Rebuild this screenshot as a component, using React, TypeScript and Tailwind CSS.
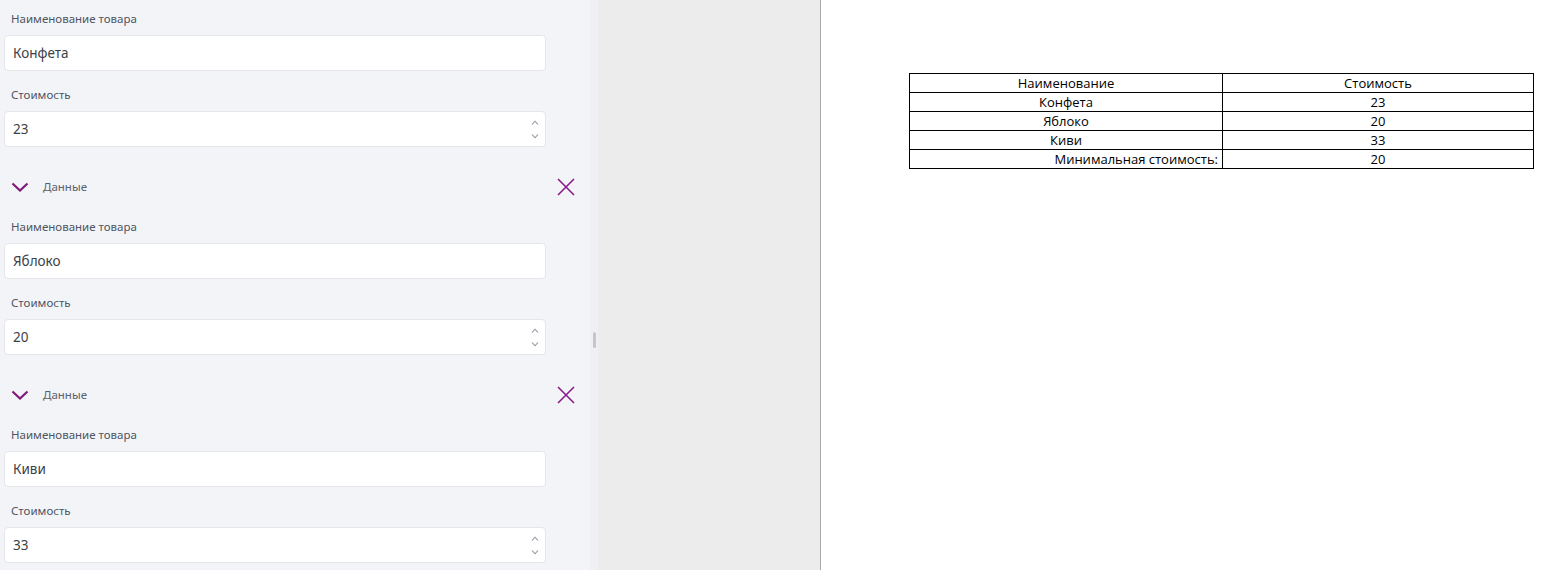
const items = [
  { name: "Конфета", price: "23" },
  { name: "Яблоко", price: "20" },
  { name: "Киви", price: "33" },
];

function Field({ label, value, spin }: { label: string; value: string; spin?: boolean }) {
  return (
    <div>
      <div className="h-4 pl-[7px] text-[11.5px] leading-4 text-[#4f5563]">{label}</div>
      <div className="mt-2 flex h-9 w-[542px] items-center justify-between rounded-[4px] border border-[#e4e6eb] bg-white pl-[8px] pr-[6px] text-[13.5px] text-[#3b3f47]">
        <span>{value}</span>
        {spin && (
          <div className="flex flex-col items-center gap-[9px] text-[#8b95a4]">
            <svg width="8" height="5" viewBox="0 0 8 5" fill="none" stroke="currentColor" strokeWidth="1.1">
              <path d="M1 4.5 L4 1.2 L7 4.5" />
            </svg>
            <svg width="8" height="5" viewBox="0 0 8 5" fill="none" stroke="currentColor" strokeWidth="1.1">
              <path d="M1 0.5 L4 3.8 L7 0.5" />
            </svg>
          </div>
        )}
      </div>
    </div>
  );
}

function GroupHeader() {
  return (
    <div className="mt-5 flex h-10 w-[571px] items-center justify-between">
      <div className="flex items-center">
        <svg className="ml-[7px]" width="18" height="10" viewBox="0 0 18 10" fill="none" stroke="#7d1a7b" strokeWidth="2.2">
          <path d="M1.5 1.5 L9 8.5 L16.5 1.5" />
        </svg>
        <span className="ml-[14px] text-[11.5px] text-[#5a606c]">Данные</span>
      </div>
      <svg width="18" height="18" viewBox="0 0 18 18" fill="none" stroke="#8a1a88" strokeWidth="1.6">
        <path d="M1 1 L17 17 M17 1 L1 17" />
      </svg>
    </div>
  );
}

export default function App() {
  return (
    <div className="flex h-[570px] w-[1545px] overflow-hidden bg-white" style={{ fontFamily: '"Noto Sans", "Open Sans", sans-serif' }}>
      <div className="w-[590px] shrink-0 bg-[#f3f4f8] pl-1 pt-[11px]">
        {items.map((it, i) => (
          <div key={it.name}>
            {i > 0 && (
              <>
                <GroupHeader />
                <div className="h-3" />
              </>
            )}
            <Field label="Наименование товара" value={it.name} />
            <div className="h-4" />
            <Field label="Стоимость" value={it.price} spin />
          </div>
        ))}
      </div>
      <div className="flex w-2 shrink-0 flex-col items-center bg-[#eff0f4] pt-[332px]">
        <div className="h-4 w-[3px] rounded-sm bg-[#c6c6c8]" />
      </div>
      <div className="w-[223px] shrink-0 border-r border-[#a9a9a9] bg-[#ececec]" />
      <div className="flex-1 pl-[88px] pt-[73px]">
        <table className="w-[625px] border-collapse text-[13px] leading-[18px] text-black" style={{ fontFamily: '"Open Sans", "Noto Sans", sans-serif' }}>
          <tbody>
            <tr>
              <td className="w-[313px] border border-black p-0 text-center">Наименование</td>
              <td className="border border-black p-0 text-center">Стоимость</td>
            </tr>
            {items.map((it) => (
              <tr key={it.name}>
                <td className="border border-black p-0 text-center">{it.name}</td>
                <td className="border border-black p-0 text-center">{it.price}</td>
              </tr>
            ))}
            <tr>
              <td className="border border-black p-0 pr-1 text-right">Минимальная стоимость:</td>
              <td className="border border-black p-0 text-center">20</td>
            </tr>
          </tbody>
        </table>
      </div>
    </div>
  );
}
